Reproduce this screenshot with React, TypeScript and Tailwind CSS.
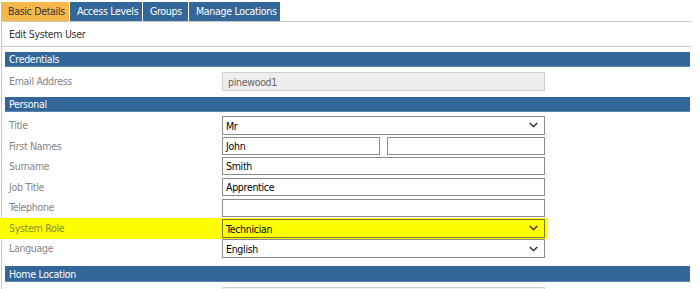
import type { ReactNode } from "react";

const font = "font-['DejaVu_Sans_Condensed','DejaVu_Sans',sans-serif] tracking-[-0.3px] whitespace-nowrap";

const tabs = [
  { label: "Basic Details", w: "w-[68px]", active: true },
  { label: "Access Levels", w: "w-[72px]" },
  { label: "Groups", w: "w-[45px]" },
  { label: "Manage Locations", w: "w-[91px]" },
];

function Chevron() {
  return (
    <svg
      className="pointer-events-none absolute right-[6px] top-1/2 -translate-y-1/2"
      width="9"
      height="6"
      viewBox="0 0 9 6"
      fill="none"
    >
      <path d="M0.8 1l3.7 3.7 3.7-3.7" stroke="#222" strokeWidth="1.3" />
    </svg>
  );
}

function SectionBar({ title, h = "h-[15px] leading-[15px]" }: { title: string; h?: string }) {
  return (
    <div className={`ml-[3px] mr-[2px] ${h} bg-[#336699] border-b border-[#5b87b3] pl-[4px] text-[10.5px] text-white`}>
      {title}
    </div>
  );
}

function Row({ label, children, highlight }: { label: string; children: ReactNode; highlight?: boolean }) {
  return (
    <div
      className={
        highlight
          ? "flex h-[20.6px] w-[548px] -ml-[2px] items-center bg-[#ffff00] pl-[2px]"
          : "flex h-[20.6px] w-[546px] items-center"
      }
    >
      <div className={`w-[220px] pl-[7px] pt-[1px] text-[10.5px] ${highlight ? "text-[#8a8a3a]" : "text-[#858585]"}`}>{label}</div>
      <div className="w-[323px]">{children}</div>
    </div>
  );
}

function TextBox({ value, w = "w-full" }: { value: string; w?: string }) {
  return (
    <div className={`${w} h-[18px] border border-[#8c8c8c] bg-white px-[3px] text-[10.5px] leading-[17px] text-black`}>
      {value}
    </div>
  );
}

function SelectBox({ value, highlight }: { value: string; highlight?: boolean }) {
  return (
    <div
      className={`relative h-[19px] w-full border px-[3px] text-[10.5px] leading-[18px] text-black ${
        highlight ? "border-[#7a7a2a] bg-[#ffff00]" : "border-[#8c8c8c] bg-white"
      }`}
    >
      {value}
      <Chevron />
    </div>
  );
}

export default function App() {
  return (
    <div className={`${font} h-[289px] w-[700px] overflow-hidden bg-white`}>
      <div className="flex gap-[1px] pl-[1px] pt-[2px]">
        {tabs.map(t => (
          <div
            key={t.label}
            className={`${t.w} h-[19px] pl-[7px] text-[10.5px] leading-[19px] ${
              t.active ? "bg-[#f7b84b] text-[#333]" : "bg-[#336699] text-white"
            }`}
          >
            {t.label}
          </div>
        ))}
      </div>

      <div className="ml-[1px] w-[691px] border-l border-t border-[#c8c8c8]">
        <div className="h-[25px] border-b border-[#c8c8c8] pl-[7px] text-[10.5px] leading-[24px] text-[#333]">
          Edit System User
        </div>

        <div className="mt-[5px]">
          <SectionBar title="Credentials" />
        </div>
        <div className="flex h-[30px] w-[546px] items-start pt-[5px]">
          <div className="w-[220px] pl-[7px] pt-[2px] text-[10.5px] text-[#858585]">Email Address</div>
          <div className="h-[19px] w-[323px] border border-[#cfcfcf] bg-[#eeeeee] px-[5px] text-[10.5px] leading-[18px] text-[#666]">
            pinewood1
          </div>
        </div>

        <SectionBar title="Personal" />
        <div className="mt-[3px] flex flex-col">
          <Row label="Title">
            <SelectBox value="Mr" />
          </Row>
          <Row label="First Names">
            <div className="flex justify-between">
              <TextBox value="John" w="w-[158px]" />
              <TextBox value="" w="w-[158px]" />
            </div>
          </Row>
          <Row label="Surname">
            <TextBox value="Smith" />
          </Row>
          <Row label="Job Title">
            <TextBox value="Apprentice" />
          </Row>
          <Row label="Telephone">
            <TextBox value="" />
          </Row>
          <Row label="System Role" highlight>
            <SelectBox value="Technician" highlight />
          </Row>
          <Row label="Language">
            <SelectBox value="English" />
          </Row>
        </div>

        <div className="mt-[7px]">
          <SectionBar title="Home Location" h="h-[16px] leading-[16px]" />
        </div>
        <div className="flex w-[546px] pt-[5px]">
          <div className="w-[220px]" />
          <div className="h-[19px] w-[323px] border border-[#c9d3df] bg-[#f4f4f4]" />
        </div>
      </div>
    </div>
  );
}
